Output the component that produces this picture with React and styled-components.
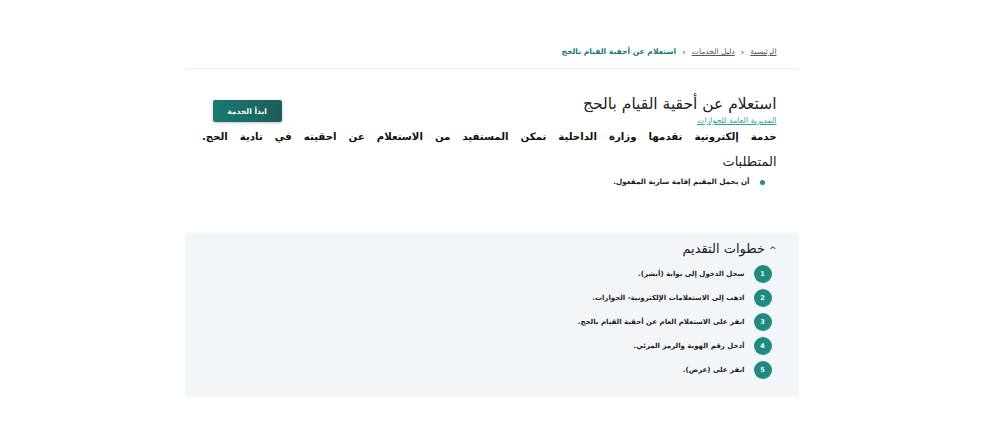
import React from "react";
import styled, { createGlobalStyle } from "styled-components";

const Global = createGlobalStyle`
  html, body { margin: 0; padding: 0; background: #ffffff; }
  body { font-family: "DejaVu Sans", "Noto Sans", sans-serif; color: #1d1d1d; }
  * { box-sizing: border-box; }
`;

const Page = styled.div`
  width: 614px;
  margin: 0 auto;
  padding-top: 44px;
  direction: rtl;
`;

const Breadcrumb = styled.nav`
  display: flex;
  align-items: center;
  gap: 6px;
  padding: 0 22px 8px;
  font-size: 7.6px;
  line-height: 16px;
  border-bottom: 1px solid #efefef;
`;

const Crumb = styled.a`
  color: ${(p) => (p.$current ? "#167a73" : "#555")};
  font-weight: ${(p) => (p.$current ? 700 : 400)};
  text-decoration: ${(p) => (p.$current ? "none" : "underline")};
`;

const Sep = styled.span`
  color: #555;
  font-size: 9px;
`;

const Content = styled.div`
  padding: 25px 22px 0;
`;

const HeaderRow = styled.div`
  display: flex;
  justify-content: space-between;
  align-items: flex-start;
`;

const TitleBlock = styled.div`
  display: flex;
  flex-direction: column;
  align-items: flex-start;
`;

const Title = styled.h1`
  margin: 0;
  font-size: 15.5px;
  font-weight: 400;
  line-height: 20px;
  color: #222;
`;

const Agency = styled.a`
  margin-top: 1px;
  font-size: 7.8px;
  line-height: 12px;
  color: #2aa39a;
  text-decoration: underline;
`;

const StartButton = styled.button`
  margin-top: 6px;
  margin-left: 6px;
  width: 69px;
  height: 22px;
  border: none;
  border-radius: 2px;
  background: linear-gradient(90deg, #187a72 0%, #1c5e5b 100%);
  color: #fff;
  font-family: inherit;
  font-size: 7.6px;
  font-weight: 700;
  box-shadow: 0 1px 3px rgba(0, 0, 0, 0.25);
`;

const Description = styled.p`
  margin: 4px 0 0;
  font-size: 10.2px;
  font-weight: 700;
  line-height: 12px;
  white-space: nowrap;
  word-spacing: 8.5px;
  color: #111;
`;

const SectionTitle = styled.h2`
  margin: 10px 0 0;
  font-size: 13px;
  font-weight: 400;
  line-height: 18px;
  color: #222;
`;

const BulletList = styled.ul`
  margin: 4px 0 0;
  padding: 0 12px 0 0;
  list-style: none;
`;

const Bullet = styled.li`
  display: flex;
  align-items: center;
  gap: 10px;
  font-size: 7.2px;
  font-weight: 700;
  line-height: 14px;
  &::before {
    content: "";
    width: 5px;
    height: 5px;
    border-radius: 50%;
    background: #1f8a80;
  }
`;

const StepsPanel = styled.section`
  margin-top: 44px;
  background: #f2f6f9;
  padding: 7px 22px 0;
  height: 164px;
`;

const StepsHeader = styled.h3`
  margin: 0;
  font-size: 13px;
  font-weight: 400;
  line-height: 18px;
  color: #222;
  display: flex;
  align-items: center;
  gap: 4px;
`;

const Caret = styled.span`
  font-size: 9px;
  line-height: 9px;
  margin-top: 3px;
`;

const Steps = styled.ol`
  margin: 7px 0 0;
  padding: 0 5px 0 0;
  list-style: none;
  display: flex;
  flex-direction: column;
  gap: 6px;
`;

const Step = styled.li`
  display: flex;
  align-items: center;
  gap: 9px;
  font-size: 7px;
  font-weight: 700;
  line-height: 18px;
`;

const Num = styled.span`
  width: 18px;
  height: 18px;
  border-radius: 50%;
  background: #1f8a80;
  color: #fff;
  font-size: 6.5px;
  font-weight: 700;
  display: flex;
  align-items: center;
  justify-content: center;
  flex: none;
`;

const steps = [
  "سجل الدخول إلى بوابة (أبشر).",
  "اذهب إلى الاستعلامات الإلكترونية- الجوازات.",
  "انقر على الاستعلام العام عن أحقية القيام بالحج.",
  "أدخل رقم الهوية والرمز المرئي.",
  "انقر على (عرض).",
];

export default function App() {
  return (
    <>
      <Global />
      <Page>
        <Breadcrumb>
          <Crumb>الرئيسية</Crumb>
          <Sep>&lsaquo;</Sep>
          <Crumb>دليل الخدمات</Crumb>
          <Sep>&lsaquo;</Sep>
          <Crumb $current>استعلام عن أحقية القيام بالحج</Crumb>
        </Breadcrumb>
        <Content>
          <HeaderRow>
            <TitleBlock>
              <Title>استعلام عن أحقية القيام بالحج</Title>
              <Agency>المديرية العامة للجوازات</Agency>
            </TitleBlock>
            <StartButton>ابدأ الخدمة</StartButton>
          </HeaderRow>
          <Description>
            خدمة إلكترونية تقدمها وزارة الداخلية تمكن المستفيد من الاستعلام عن احقيته في تادية الحج.
          </Description>
          <SectionTitle>المتطلبات</SectionTitle>
          <BulletList>
            <Bullet>أن يحمل المقيم إقامة سارية المفعول.</Bullet>
          </BulletList>
        </Content>
        <StepsPanel>
          <StepsHeader>
            <Caret>^</Caret>
            خطوات التقديم
          </StepsHeader>
          <Steps>
            {steps.map((s, i) => (
              <Step key={i}>
                <Num>{i + 1}</Num>
                {s}
              </Step>
            ))}
          </Steps>
        </StepsPanel>
      </Page>
    </>
  );
}
